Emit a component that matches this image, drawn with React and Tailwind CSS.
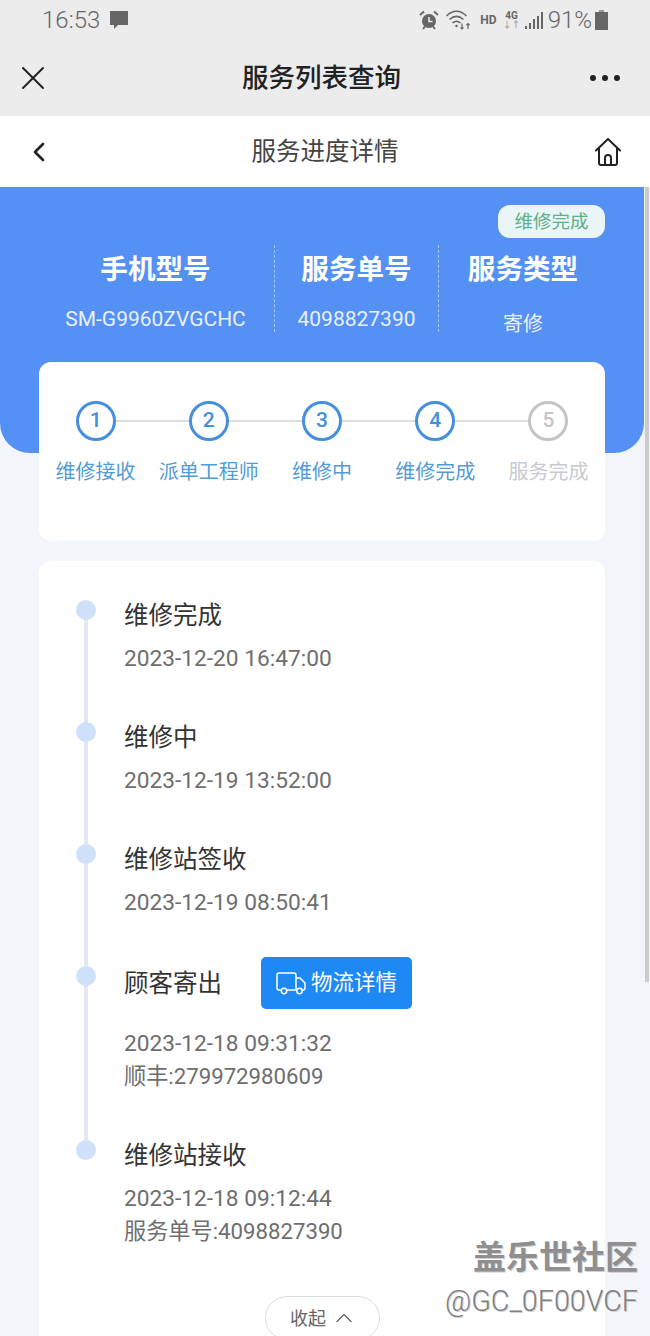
import React from 'react';
import { X, ChevronLeft, ChevronUp } from 'lucide-react';

const font = "font-['Roboto','Noto_Sans_CJK_SC',sans-serif]";

const steps = [
    { n: 1, label: '维修接收', on: true },
    { n: 2, label: '派单工程师', on: true },
    { n: 3, label: '维修中', on: true },
    { n: 4, label: '维修完成', on: true },
    { n: 5, label: '服务完成', on: false },
];

const StatusIcons = () => (
    <div className="flex items-center text-[#666]">
        {/* alarm */}
        <svg width="20" height="20" viewBox="0 0 20 20" className="mr-[7px]">
            <circle cx="10" cy="11" r="7" fill="#666" />
            <path d="M10 7v4.500h3.500" stroke="#ececec" strokeWidth="1.600" fill="none" />
            <path d="M1 5l4-3.500M19 5l-4-3.500" stroke="#666" strokeWidth="2" />
            <path d="M4 19l2-2.500M16 19l-2-2.500" stroke="#666" strokeWidth="2" />
        </svg>
        {/* wifi */}
        <svg width="25" height="22" viewBox="0 0 25 22" className="mr-[9px]" fill="none" stroke="#666" strokeWidth="1.500">
            <path d="M0.500 7c6-6.500 14-6.500 20 0" />
            <path d="M3.500 10.500c4.500-4 9.500-4 14 0" />
            <path d="M6.500 14c2.500-2.200 5.500-2.200 8 0" />
            <circle cx="10.500" cy="17" r="1.200" fill="#666" stroke="none" />
            <path d="M16 14.500v5.500M14.500 18.500l1.500 1.500 1.500-1.500M22 20v-5.500M20.500 16l1.500-1.500 1.500 1.500" strokeWidth="1.200" />
        </svg>
        <span className="text-[12px] font-bold mr-[6px] leading-none">HD</span>
        <div className="flex flex-col items-center mr-[4px] leading-none">
            <span className="text-[10px] font-bold leading-[10px]">4G</span>
            <span className="text-[9px] font-bold leading-[9px] text-[#aaa]">↓↑</span>
        </div>
        <div className="flex items-end gap-[2px] h-[17px] mr-[5px]">
            <div className="w-[2px] h-[3px] bg-[#666]" />
            <div className="w-[2px] h-[6px] bg-[#666]" />
            <div className="w-[2px] h-[10px] bg-[#666]" />
            <div className="w-[2px] h-[13px] bg-[#666]" />
            <div className="w-[2px] h-[17px] bg-[#666]" />
        </div>
        <span className="text-[24px] font-light leading-none mr-[3px]">91%</span>
        <svg width="13" height="20" viewBox="0 0 13 20">
            <path d="M4 0h5v2H4z" fill="#999" />
            <path d="M0 2h13v18H0z" fill="#666" />
        </svg>
    </div>
);

const TimelineItem = ({ title, lines, action, className = '', dotClass = 'top-0', dateClass = 'mt-[12px]' }) => (
    <div className={`relative pl-[85px] ${className}`}>
        <div className={`absolute left-[37px] w-5 h-5 rounded-full bg-[#cfe0fa] ${dotClass}`} />
        <div className="flex items-center min-h-[31px] text-[24.500px] leading-[30px] text-[#333]">
            <span className="pt-[1px]">{title}</span>
            {action}
        </div>
        <div className={`text-[22.700px] leading-[32px] text-[#6e6e6e] ${dateClass}`}>
            {lines.map((l, i) => <div key={l} className={i === 1 ? 'text-[22.200px]' : ''}>{l}</div>)}
        </div>
    </div>
);

const App = () => {
    return (
        <div className={`relative w-[650px] h-[1336px] overflow-hidden bg-[#f2f5f9] ${font}`}>
            {/* system bar + wechat title */}
            <div className="bg-[#ececec] h-[116px]">
                <div className="flex items-center justify-between h-[40px] pl-[42px] pr-[42px]">
                    <div className="flex items-center text-[#666]">
                        <span className="text-[24px] font-light leading-none">16:53</span>
                        <svg width="20" height="20" viewBox="0 0 20 20" className="ml-[9px]">
                            <path d="M1 1h18v14H9l-4 4v-4H1z" fill="#666" />
                        </svg>
                    </div>
                    <StatusIcons />
                </div>
                <div className="flex items-center justify-between h-[76px] pl-[13px] pr-[30px]">
                    <X size={40} strokeWidth={1.200} className="text-[#222]" />
                    <span className="text-[26.500px] font-medium text-[#222]">服务列表查询</span>
                    <div className="flex gap-[6px]">
                        <div className="w-[6px] h-[6px] rounded-full bg-[#222]" />
                        <div className="w-[6px] h-[6px] rounded-full bg-[#222]" />
                        <div className="w-[6px] h-[6px] rounded-full bg-[#222]" />
                    </div>
                </div>
            </div>

            {/* page nav */}
            <div className="bg-white h-[71px] flex items-center justify-between pl-[23px] pr-[29px]">
                <ChevronLeft size={32} strokeWidth={2} className="text-[#222]" />
                <span className="text-[24.500px] text-[#444] mt-[2px]">服务进度详情</span>
                <svg width="26" height="28" viewBox="0 0 26 28" fill="none" stroke="#222" strokeWidth="2" strokeLinejoin="round" strokeLinecap="round">
                    <path d="M1 12.500L13 1l12 11.500" />
                    <path d="M4 10v15a2 2 0 0 0 2 2h14a2 2 0 0 0 2-2V10" />
                    <path d="M10 27v-7a3 3 0 0 1 6 0v7" />
                </svg>
            </div>

            {/* blue header */}
            <div className="bg-[#5590f4] w-[644px] h-[266px] rounded-b-[30px] pt-[18px]">
                <div className="flex justify-end pr-[39px]">
                    <div className="w-[107px] h-[33px] rounded-[12px] bg-[#eaf5f8] text-[#5cb08a] text-[18.500px] leading-[35px] text-center">维修完成</div>
                </div>
                <div className="flex h-[87px] mt-[7px] pl-[37px] pr-[37px] text-white text-center">
                    <div className="w-[238px] border-r border-dashed border-white/50">
                        <div className="text-[27.600px] font-bold leading-[34px] mt-[8px]">手机型号</div>
                        <div className="text-[21px] leading-[24px] mt-[20px] text-[#e8f0ff]">SM-G9960ZVGCHC</div>
                    </div>
                    <div className="w-[164px] border-r border-dashed border-white/50">
                        <div className="text-[27.600px] font-bold leading-[34px] mt-[8px]">服务单号</div>
                        <div className="text-[21px] leading-[24px] mt-[20px] text-[#e8f0ff]">4098827390</div>
                    </div>
                    <div className="flex-1">
                        <div className="text-[27.600px] font-bold leading-[34px] mt-[8px]">服务类型</div>
                        <div className="text-[20px] leading-[24px] mt-[25px] text-[#e8f0ff]">寄修</div>
                    </div>
                </div>
            </div>

            {/* steps card */}
            <div className="relative -mt-[91px] mx-[39px] w-[566px] h-[179px] bg-white rounded-[12px] pt-[39px]">
                <div className="absolute left-[57px] right-[57px] top-[58px] h-[2px] bg-[#dcdcdc]" />
                <div className="relative grid grid-cols-5">
                    {steps.map((s) => (
                        <div key={s.n} className="flex flex-col items-center">
                            <div className={`w-10 h-10 rounded-full bg-white border-[3px] flex items-center justify-center text-[21px] font-medium ${s.on ? 'border-[#4590dc] text-[#4590dc]' : 'border-[#c4c4c8] text-[#c4c4c8]'}`}>{s.n}</div>
                            <div className={`mt-[19px] text-[20px] leading-[24px] whitespace-nowrap ${s.on ? 'text-[#539bd8]' : 'text-[#c8cacf]'}`}>{s.label}</div>
                        </div>
                    ))}
                </div>
            </div>

            {/* timeline card */}
            <div className="relative mt-[20px] mx-[39px] w-[566px] h-[900px] bg-white rounded-[12px] pt-[39px]">
                <div className="absolute left-[45px] top-[49px] w-1 h-[540px] bg-[#e3e7f3]" />
                <TimelineItem title="维修完成" lines={['2023-12-20 16:47:00']} />
                <TimelineItem className="mt-[47px]" title="维修中" lines={['2023-12-19 13:52:00']} />
                <TimelineItem className="mt-[47px]" title="维修站签收" lines={['2023-12-19 08:50:41']} />
                <TimelineItem
                    className="mt-[38px]"
                    dotClass="top-[9px]"
                    dateClass="mt-[19px]"
                    title="顾客寄出"
                    lines={['2023-12-18 09:31:32', '顺丰:279972980609']}
                    action={
                        <div className="ml-[39px] flex items-center justify-center shrink-0 w-[151px] h-[52px] rounded-[5px] bg-[#1e88f5] text-white text-[21.500px]">
                            <svg width="30" height="23" viewBox="0 0 30 23" fill="none" stroke="white" strokeWidth="1.500" className="mr-[5px]">
                                <path d="M5 18H3a2 2 0 0 1-2-2V3a2 2 0 0 1 2-2h15a2 2 0 0 1 2 2v15H11" />
                                <path d="M20 6h4l5 5v5a2 2 0 0 1-2 2h-1M20 18h1" />
                                <circle cx="8" cy="19" r="2.700" />
                                <circle cx="23.500" cy="19" r="2.700" />
                            </svg>
                            物流详情
                        </div>
                    }
                />
                <TimelineItem className="mt-[48px]" title="维修站接收" lines={['2023-12-18 09:12:44', '服务单号:4098827390']} />
                <div className="mt-[49px] ml-[226px] w-[115px] h-[44px] rounded-[22px] border border-[#ddd] flex items-center justify-center gap-[4px] pl-[3px] text-[18px] text-[#666]">
                    收起
                    <ChevronUp size={28} strokeWidth={1.200} />
                </div>
            </div>

            {/* scrollbar */}
            <div className="absolute left-[645px] top-[187px] w-[4px] h-[795px] bg-[#cbcbcb]" />

            {/* watermark */}
            <div className="absolute right-[12px] top-[1237px] text-right">
                <div className="text-[33px] leading-[42px] font-bold text-[#8f8f8f] [text-shadow:1px_1px_0_#d0d0d0]">盖乐世社区</div>
                <div className="text-[28.700px] font-light leading-[36px] mt-[4px] text-[#7f7f7f] [text-shadow:1px_1px_0_#d0d0d0]">@GC_0F00VCF</div>
            </div>
        </div>
    );
};

export default App;
